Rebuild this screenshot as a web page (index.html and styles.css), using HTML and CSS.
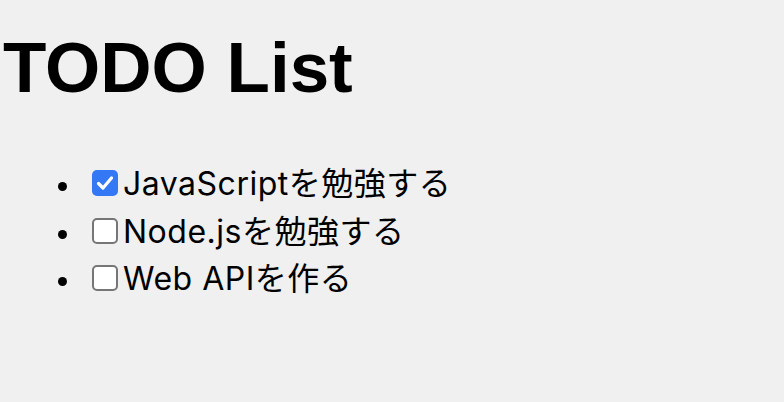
FILE: index.html
```html
<!DOCTYPE html>
<html lang="ja">
<head>
    <meta charset="UTF-8">
    <meta name="viewport" content="width=device-width, initial-scale=1.0">
    <title>TODO List</title>
    <link rel="stylesheet" href="styles.css">
</head>
<body>
    <h1 class="title">TODO List</h1>
    <ul class="todo-list">
        <li><label><input type="checkbox" checked>JavaScriptを勉強する</label></li>
        <li><label><input type="checkbox">Node.jsを勉強する</label></li>
        <li><label><input type="checkbox">Web APIを作る</label></li>
    </ul>
</body>
</html>
```

FILE: styles.css
```css
body {
    margin: 0;
    background-color: #f0f0f0;
    color: #000;
    font-family: Inter, "Noto Sans CJK JP", sans-serif;
}

.title {
    margin: 28px 0 0 3px;
    font-family: "Liberation Sans", "Noto Sans CJK JP", sans-serif;
    font-size: 71px;
    font-weight: bold;
    line-height: 80px;
}

.todo-list {
    margin: 52px 0 0 0;
    padding-left: 92px;
    list-style: none;
    font-size: 32px;
    line-height: 47.5px;
    letter-spacing: 0.5px;
}

.todo-list li {
    position: relative;
}

/* bullet sits a bit further left than the default marker */
.todo-list li::before {
    content: "";
    position: absolute;
    left: -34px;
    top: 22px;
    width: 9px;
    height: 9px;
    border-radius: 50%;
    background-color: #000;
}

.todo-list input {
    -webkit-appearance: none;
    appearance: none;
    width: 26px;
    height: 26px;
    margin: 0 5px -1px 0;
    box-sizing: border-box;
    border: 2px solid #767676;
    border-radius: 5px;
    background-color: #fff;
    vertical-align: baseline;
}

.todo-list input:checked {
    border: none;
    background-color: #3478f6;
    background-image: url("data:image/svg+xml,%3Csvg xmlns='http://www.w3.org/2000/svg' viewBox='0 0 26 26'%3E%3Cpath d='M6.5 13.5l4.5 4.5 8.5-10' fill='none' stroke='%23fff' stroke-width='3.2' stroke-linecap='round' stroke-linejoin='round'/%3E%3C/svg%3E");
}
```
